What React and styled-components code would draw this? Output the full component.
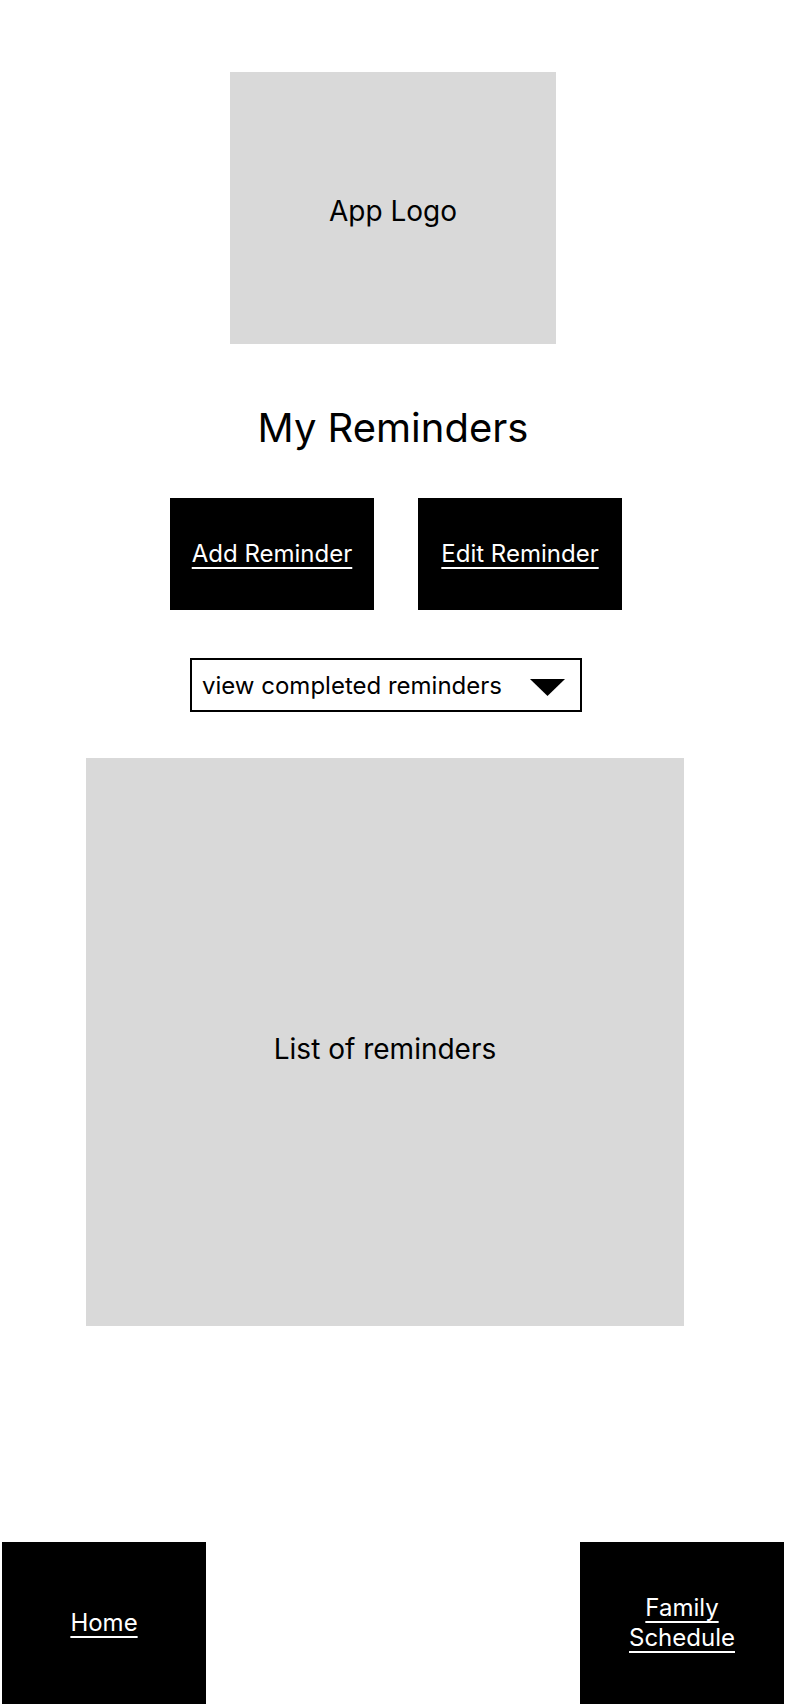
import React from "react";
import styled, { createGlobalStyle } from "styled-components";

const GlobalStyle = createGlobalStyle`
  html, body {
    margin: 0;
    padding: 0;
    background: #fff;
  }
  body {
    font-family: Inter, "Noto Sans", sans-serif;
    color: #000;
  }
`;

const Page = styled.div`
  min-height: 1704px;
  display: flex;
  flex-direction: column;
  align-items: center;
  padding-top: 72px;
  box-sizing: border-box;
`;

const Placeholder = styled.div`
  background: #d9d9d9;
  display: flex;
  align-items: center;
  justify-content: center;
  box-sizing: border-box;
  font-size: 28px;
  width: ${({ w }) => w}px;
  height: ${({ h }) => h}px;
  padding-top: ${({ drop }) => drop || 0}px;
  margin-right: ${({ shift }) => shift || 0}px;
`;

const Title = styled.h1`
  margin: 60px 0 0;
  font-size: 40px;
  font-weight: 400;
  line-height: 48px;
`;

const ButtonRow = styled.div`
  display: flex;
  gap: 44px;
  margin: 46px 0 0 6px;
`;

const BlackButton = styled.a`
  width: 204px;
  height: ${({ tall }) => (tall ? 162 : 112)}px;
  background: #000;
  color: #fff;
  display: flex;
  align-items: center;
  justify-content: center;
  text-align: center;
  font-size: 24px;
  line-height: 30px;
  text-decoration: underline;
  text-underline-offset: 5px;
  text-decoration-thickness: 2px;
  cursor: pointer;
`;

const Dropdown = styled.div`
  width: 392px;
  height: 54px;
  box-sizing: border-box;
  border: 2px solid #000;
  margin: 48px 14px 0 0;
  display: flex;
  align-items: center;
  justify-content: space-between;
  padding: 0 15px 0 10px;
  font-size: 24px;
`;

const Caret = styled.svg`
  width: 35px;
  height: 17px;
  margin-top: 4px;
`;

const ListArea = styled(Placeholder)`
  margin-top: 46px;
`;

const BottomNav = styled.nav`
  margin-top: auto;
  align-self: stretch;
  display: flex;
  justify-content: space-between;
  padding: 0 2px;
`;

export default function App() {
  return (
    <>
      <GlobalStyle />
      <Page>
        <Placeholder w={326} h={272} drop={6}>App Logo</Placeholder>
        <Title>My Reminders</Title>
        <ButtonRow>
          <BlackButton>Add Reminder</BlackButton>
          <BlackButton>Edit Reminder</BlackButton>
        </ButtonRow>
        <Dropdown>
          <span>view completed reminders</span>
          <Caret viewBox="0 0 35 17">
            <polygon points="0,0 35,0 17.5,17" fill="#000" />
          </Caret>
        </Dropdown>
        <ListArea w={598} h={568} shift={16} drop={13}>List of reminders</ListArea>
        <BottomNav>
          <BlackButton tall>Home</BlackButton>
          <BlackButton tall>
            Family
            <br />
            Schedule
          </BlackButton>
        </BottomNav>
      </Page>
    </>
  );
}
